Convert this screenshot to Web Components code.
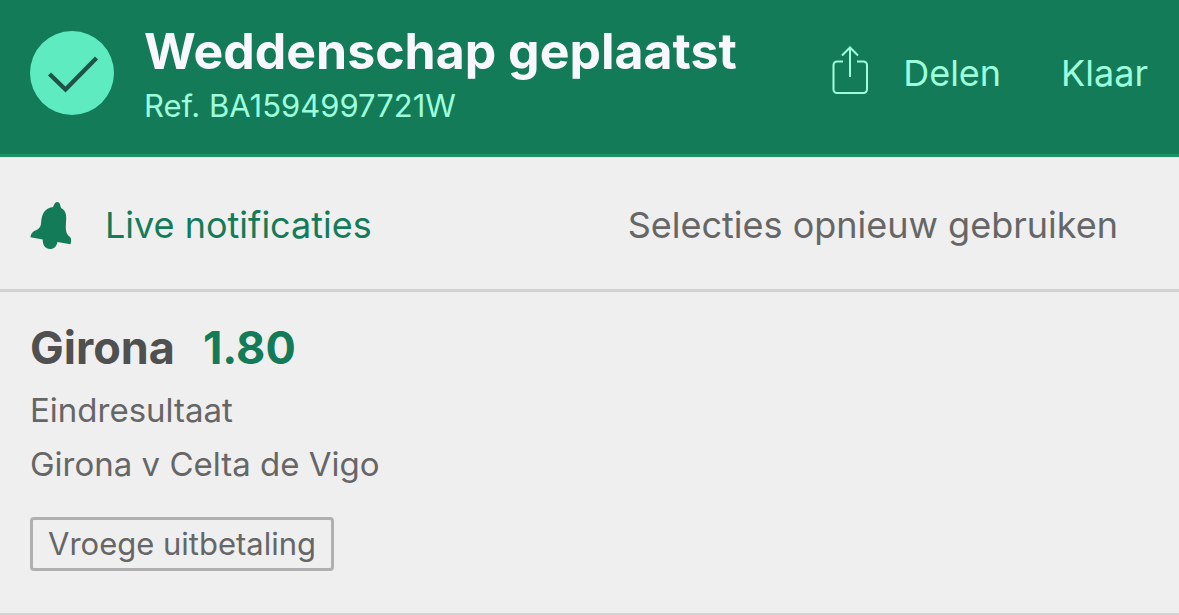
<!DOCTYPE html>
<html lang="nl">
<head>
<meta charset="utf-8">
<title>Weddenschap geplaatst</title>
<style>
html { background: #efefef; }
body { margin: 0; font-family: Inter, "Liberation Sans", sans-serif; color: #666; }
</style>
</head>
<body>
<bet-receipt></bet-receipt>
<script>
const define = (name, html) => customElements.define(name, class extends HTMLElement {
  constructor() {
    super();
    this.attachShadow({ mode: "open" }).innerHTML = html;
  }
});

define("receipt-header", `
<style>
:host { display: flex; align-items: center; box-sizing: border-box; min-height: 157px; padding: 0 31px 8px 30px; background: #147b59; border-bottom: 3px solid #199467; color: #9dffdc; }
svg { display: block; flex: none; }
.text { flex: 1; margin-left: 30px; padding-top: 6px; white-space: nowrap; }
h1 { margin: 0; font-size: 50px; line-height: 60px; font-weight: 700; color: #f8f8fc; }
p { margin: 0; font-size: 31px; line-height: 50px; }
button { display: flex; align-items: center; gap: 34px; margin: 0; padding: 0; border: 0; background: none; color: inherit; font: inherit; font-size: 36px; line-height: 44px; cursor: pointer; }
.done { margin-left: 60px; }
</style>
<svg width="84" height="84" viewBox="0 0 84 84" aria-hidden="true"><circle cx="42" cy="42" r="42" fill="#5eebc0"/><path d="M19.500 43 35.500 58.500 66.500 27" fill="none" stroke="#1f5347" stroke-width="4.300"/></svg>
<div class="text"><h1><slot name="title"></slot></h1><p><slot name="ref"></slot></p></div>
<button type="button"><svg width="38" height="54" viewBox="0 0 38 54" fill="none" stroke="#9dffdc" stroke-width="2" aria-hidden="true"><path d="M12 15.500H6a3.500 3.500 0 0 0-3.500 3.500v24.500a3.500 3.500 0 0 0 3.500 3.500h26.500a3.500 3.500 0 0 0 3.500-3.500V19a3.500 3.500 0 0 0-3.500-3.500H26M19 31V2M11 9.500l8-8 8 8"/></svg><span>Delen</span></button>
<button type="button" class="done">Klaar</button>`);

define("receipt-actions", `
<style>
:host { display: flex; align-items: center; justify-content: space-between; box-sizing: border-box; min-height: 135px; padding: 4px 61px 0 30px; border-bottom: 3px solid #d2d2d2; }
svg { display: block; flex: none; }
button { display: flex; align-items: center; gap: 33px; margin: 0; padding: 0; border: 0; background: none; color: inherit; font: inherit; font-size: 36px; line-height: 44px; white-space: nowrap; cursor: pointer; }
.live { color: #147b59; }
</style>
<button type="button" class="live"><svg width="42" height="48" viewBox="0 0 42 48" aria-hidden="true"><path fill="#147b59" d="M24 4C25 .5 29 0 30 3.500L31 7C35 9 36.200 12 36.200 17L35.800 26C35.800 32 37.500 34 40 36Q42 38 40.500 43.200L27.500 41C26.500 45.500 24 48 20 48C15.500 48 12.700 44.500 12.700 38.500L.5 36.200C1 33 2 31 5.500 29.500C9 28 10.500 26 11 23C11.500 15 13 10.500 18 7.500Q20.500 6 23 6Z"/></svg><span>Live notificaties</span></button>
<button type="button">Selecties opnieuw gebruiken</button>`);

define("bet-selection", `
<style>
:host { display: block; padding: 28px 30px 42px; border-bottom: 2px solid #d2d2d2; }
h2 { display: flex; gap: 28px; margin: 0; font-size: 45px; line-height: 56px; font-weight: 700; color: #505050; }
.odds { color: #147b59; }
p { margin: 0; font-size: 33px; line-height: 54px; }
.lines { padding-top: 7px; }
.tag { display: inline-block; box-sizing: border-box; margin-top: 26px; padding: 0 15px; border: 3px solid #b0b0b0; border-radius: 4px; font-size: 31px; line-height: 48px; vertical-align: top; }
</style>
<h2><slot name="team"></slot><span class="odds"><slot name="odds"></slot></span></h2>
<div class="lines"><p><slot name="market"></slot></p><p><slot name="event"></slot></p></div>
<div class="tag"><slot name="tag"></slot></div>`);

define("bet-receipt", `
<style>:host { display: block; }</style>
<receipt-header><span slot="title">Weddenschap geplaatst</span><span slot="ref">Ref. BA1594997721W</span></receipt-header>
<receipt-actions></receipt-actions>
<bet-selection><span slot="team">Girona</span><span slot="odds">1.80</span><span slot="market">Eindresultaat</span><span slot="event">Girona v Celta de Vigo</span><span slot="tag">Vroege uitbetaling</span></bet-selection>`);
</script>
</body>
</html>
